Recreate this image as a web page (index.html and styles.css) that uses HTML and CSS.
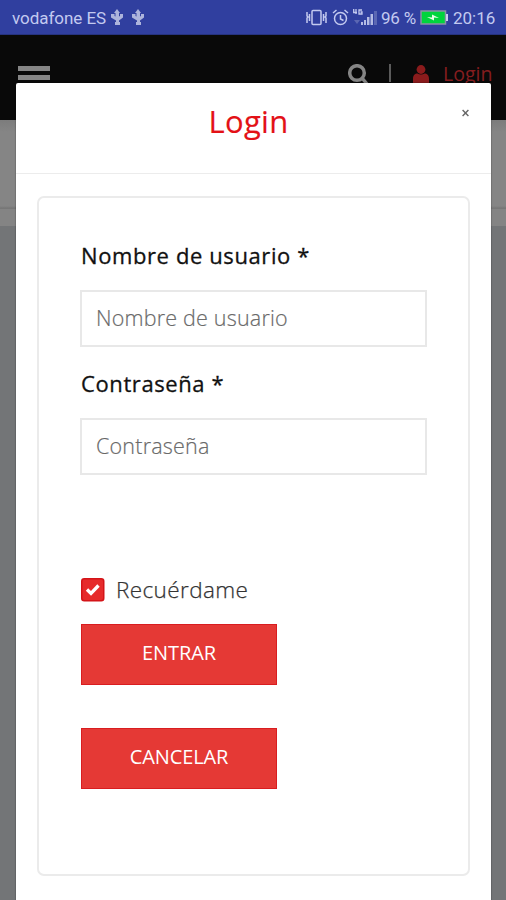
FILE: index.html
```html
<!DOCTYPE html>
<html lang="es">
<head>
<meta charset="utf-8">
<title>Login</title>
<link rel="stylesheet" href="styles.css">
</head>
<body>
<div class="screen">
  <div class="status">
    <span class="carrier">vodafone ES</span>
    <svg class="usb" width="12" height="17" viewBox="0 0 12 17"><path d="M6 0 9 4H8v3.500l1-.5V5h3v3.500L8 11.500V13h1v3H4v-3h1v-1.500L0 8.500V5h3.500v2l1 .5V4H3z"/></svg>
    <svg class="usb usb-second" width="12" height="17" viewBox="0 0 12 17"><path d="M6 0 9 4H8v3.500l1-.5V5h3v3.500L8 11.500V13h1v3H4v-3h1v-1.500L0 8.500V5h3.500v2l1 .5V4H3z"/></svg>
    <svg class="vibrate" width="21" height="17" viewBox="0 0 21 17"><rect x="6" y="1.500" width="9" height="14" rx="1"/><path d="M1 3v4l1 1-1 1v5M3.500 5v7M20 3v4l-1 1 1 1v5M17.500 5v7"/></svg>
    <svg class="alarm" width="17" height="17" viewBox="0 0 17 17"><circle cx="8.500" cy="9.500" r="6"/><path d="m1 4 3.500-3M16 4l-3.500-3M8.500 6v4l3 1.500"/></svg>
    <svg class="signal" width="25" height="17" viewBox="0 0 25 17"><path class="net" d="M3 0v5M.700 0v3.500H4M9 1H6v4h3V3H7.500"/><path class="faint" d="M1 11h6l-3 4z"/><path class="bar" d="M8 13h2v3H8zM11 11h2v5h-2zM14 8h2.500v8H14zM17.500 5H20v11h-2.500z"/><path class="faint" d="M21 2h3v14h-3z"/></svg>
    <span class="percent">96 %</span>
    <svg class="battery" width="29" height="15" viewBox="0 0 29 15"><rect x="1" y="1" width="24.500" height="13" fill="#00d43d" stroke="#8c91a8" stroke-width="1.500"/><path d="M26 4h2v7h-2z" fill="#c9cfee"/><path d="m7 7 5 .5V4.500L19 8l-5-.5v3z" fill="#e8ffe9"/></svg>
    <span class="clock">20:16</span>
  </div>
  <div class="navbar">
    <div class="menu"><i></i><i></i></div>
    <svg class="search" width="21" height="22" viewBox="0 0 21 22"><circle cx="9" cy="9" r="7.300"/><path d="m14 14 5 6"/></svg>
    <span class="divider"></span>
    <svg class="person" width="16" height="18" viewBox="0 0 16 18"><circle cx="8" cy="4.500" r="4.400"/><path d="M0 18v-4c0-4 2-5.500 4.500-5.500 2 1.300 5 1.300 7 0C14 8.500 16 10 16 14v4z"/></svg>
    <span class="nav-login">Login</span>
  </div>
  <div class="band"></div>
  <div class="strip"></div>
  <div class="page"></div>

  <div class="modal">
    <div class="modal-head">
      <h1>Login</h1>
      <svg class="close" width="7" height="8" viewBox="0 0 7 8"><path d="m.600 1 5.800 6M6.400 1 .600 7"/></svg>
    </div>
    <form class="panel">
      <label for="user">Nombre de usuario *</label>
      <input class="field" id="user" type="text" placeholder="Nombre de usuario">
      <label for="pass">Contraseña *</label>
      <input class="field field-pass" id="pass" type="text" placeholder="Contraseña">
      <div class="remember">
        <svg width="24" height="24" viewBox="0 0 24 24"><rect x=".75" y=".75" width="22" height="22" rx="2.500" fill="#e62b2b" stroke="#d41418" stroke-width="1.500"/><path d="m6 11.500 4 4 7.500-8" fill="none" stroke="#fff" stroke-width="3.300"/></svg>
        <span>Recuérdame</span>
      </div>
      <button class="btn enter" type="button">ENTRAR</button>
      <button class="btn cancel" type="button">CANCELAR</button>
    </form>
  </div>
</div>
</body>
</html>
```
FILE: styles.css
```css
* { box-sizing: border-box; }
body { margin: 0; font-family: "Open Sans", sans-serif; }
.screen { position: relative; display: flex; flex-direction: column; width: 506px; height: 900px; overflow: hidden; background: #737577; }
svg { display: block; flex: none; }

.status { display: flex; align-items: center; height: 35px; padding: 1px 0 0 12px; flex: none; background: #303f9f; border-bottom: 1px solid #26337f; color: #c3caf0; font: 17px/34px Roboto, sans-serif; white-space: nowrap; }
.carrier { width: 98px; letter-spacing: -.05px; }
.usb { fill: #adb4dc; margin-left: 1px; }
.usb-second { margin-left: 9px; }
.vibrate, .alarm { fill: none; stroke: #c3caf0; stroke-width: 1.500px; }
.vibrate { margin-left: auto; }
.alarm { margin-left: 5px; }
.signal { margin-left: 4px; }
.net { fill: none; stroke: #c3caf0; stroke-width: 1.300px; }
.bar { fill: #b4bbe4; }
.faint { fill: #5b67b3; }
.percent { width: 35px; margin-left: 3px; letter-spacing: -.2px; }
.battery { margin-left: 4px; }
.clock { width: 42px; margin: 0 11px 0 4px; }

.navbar { display: flex; align-items: flex-start; height: 85px; flex: none; padding: 29px 14px 0 18px; background: #090909; }
.menu { width: 32px; padding-top: 2px; margin-right: auto; }
.menu i { display: block; height: 5px; margin-bottom: 4px; background: #858585; }
.search { fill: none; stroke: #858585; stroke-width: 3.500px; }
.divider { width: 2px; height: 18px; margin: 0 22px 0 20px; background: #5b5b5b; }
.person { fill: #8a1b1c; margin-top: 1px; }
.nav-login { width: 49px; margin-left: 14px; margin-top: -4px; color: #851d1f; font-size: 19.500px; line-height: 27px; }
.band { height: 89px; flex: none; background: linear-gradient(#7c7c7c, #858585 12px, #858585 86px, #777 88px); }
.strip { height: 17px; flex: none; background: #848484; }
.page { flex: 1; background: #737577; }

.modal { position: absolute; left: 16px; top: 83px; width: 475px; height: 830px; background: #fff; border-radius: 2px; box-shadow: 0 0 1px 1px rgba(0,0,0,.15); }
.modal-head { position: relative; height: 91px; border-bottom: 1px solid #ececec; text-align: center; }
h1 { margin: 0; padding: 17px 10px 0 0; color: #e31116; font-size: 31px; font-weight: 400; line-height: 42px; letter-spacing: .3px; -webkit-text-stroke: .15px #e31116; }
.close { position: absolute; left: 446px; top: 26px; fill: none; stroke: #666; stroke-width: 1.400px; }
.panel { display: flex; flex-direction: column; align-items: flex-start; width: 433px; height: 680px; margin: 22px 0 0 21px; padding: 41px 41px 0 42px; border: 2px solid #ebebeb; border-radius: 7px; }
label { height: 51px; color: #111; font-size: 22px; line-height: 33px; font-weight: 400; letter-spacing: .6px; -webkit-text-stroke: .3px #111; white-space: nowrap; }
.field { display: block; width: 347px; height: 57px; margin: 0 0 20px -1px; padding: 0 14px 3px; flex: none; border: 2px solid #e8e8e8; border-radius: 0; background: #fff; font: 300 21.500px "Open Sans", sans-serif; letter-spacing: .2px; }
.field::placeholder { color: #666; opacity: 1; -webkit-text-stroke: .2px #777; }
.field-pass { margin-bottom: 0; }
.remember { display: flex; align-items: center; gap: 11px; margin-top: 99px; height: 32px; color: #333; font-size: 22.500px; font-weight: 300; line-height: 30px; letter-spacing: .4px; -webkit-text-stroke: .25px #333; }
.remember span { margin-top: -1px; }
.btn { display: block; width: 196px; height: 61px; margin: 18px 0 0; padding: 0 0 5px; flex: none; border: 1px solid #d91d20; border-radius: 0; background: #e53935; color: #fff; font: 400 20px "Open Sans", sans-serif; letter-spacing: -.1px; }
.cancel { margin-top: 43px; }
```
